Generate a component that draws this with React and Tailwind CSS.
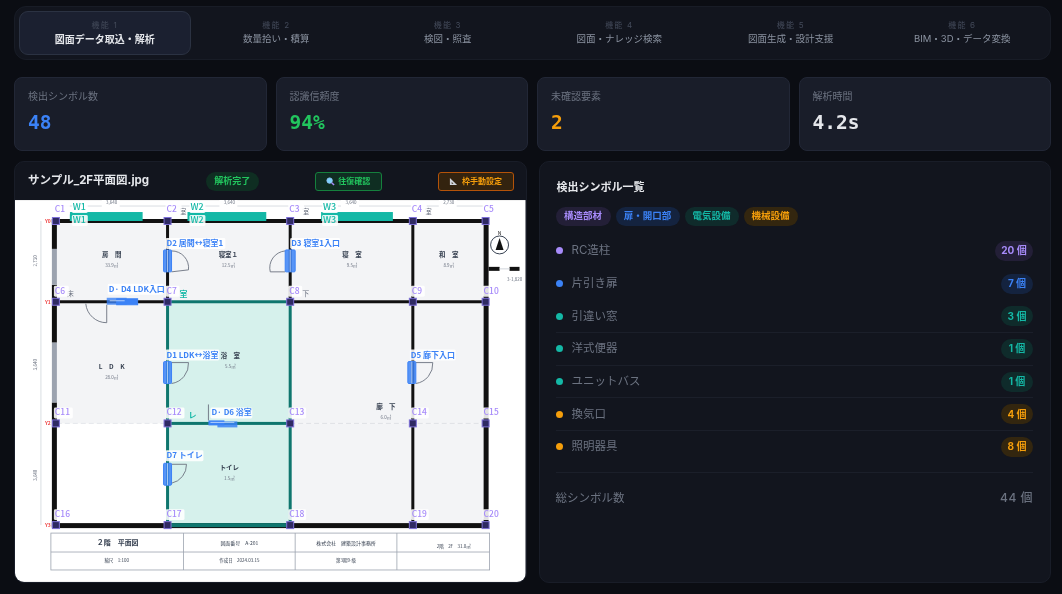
import React from "react";

const FONT = "font-['Inter','Noto_Sans_CJK_JP',sans-serif]";
const MONO = "font-['DejaVu_Sans_Mono','Noto_Sans_CJK_JP',monospace]";

const tabs = [
  ["機能 1", "図面データ取込・解析"],
  ["機能 2", "数量拾い・積算"],
  ["機能 3", "検図・照査"],
  ["機能 4", "図面・ナレッジ検索"],
  ["機能 5", "図面生成・設計支援"],
  ["機能 6", "BIM・3D・データ変換"],
];

const stats = [
  ["検出シンボル数", "48", "text-[#3b82f6]"],
  ["認識信頼度", "94%", "text-[#22c55e]"],
  ["未確認要素", "2", "text-[#f59e0b]"],
  ["解析時間", "4.2s", "text-[#e5e7eb]"],
];

const chips = [
  ["構造部材", "bg-[#231f37] text-[#a78bfa] w-[55px]"],
  ["扉・開口部", "bg-[#14233f] text-[#3b82f6] w-[64px]"],
  ["電気設備", "bg-[#0f2b2b] text-[#14b8a6] w-[54px]"],
  ["機械設備", "bg-[#33260f] text-[#f59e0b] w-[54px]"],
];

const rows = [
  ["RC造柱", "20 個", "bg-[#a78bfa]", "bg-[#231f37] text-[#a78bfa] w-[38px]", false],
  ["片引き扉", "7 個", "bg-[#3b82f6]", "bg-[#14233f] text-[#3b82f6] w-[32px]", false],
  ["引違い窓", "3 個", "bg-[#14b8a6]", "bg-[#0f2b2b] text-[#14b8a6] w-[32px]", true],
  ["洋式便器", "1 個", "bg-[#14b8a6]", "bg-[#0f2b2b] text-[#14b8a6] w-[32px]", true],
  ["ユニットバス", "1 個", "bg-[#14b8a6]", "bg-[#0f2b2b] text-[#14b8a6] w-[32px]", true],
  ["換気口", "4 個", "bg-[#f59e0b]", "bg-[#33260f] text-[#f59e0b] w-[32px]", true],
  ["照明器具", "8 個", "bg-[#f59e0b]", "bg-[#33260f] text-[#f59e0b] w-[32px]", false],
];

const JP = "'Noto Sans CJK JP', sans-serif";

function Label({ x, y, w, children, color = "#3b82f6", size = 8, weight = 700 }) {
  return (
    <g>
      <rect x={x - 1} y={y - 8} width={w} height={11} rx={1.5} fill="#ffffff" fillOpacity="0.88" />
      <text x={x} y={y} fontSize={size} fontWeight={weight} fill={color} fontFamily={JP}>{children}</text>
    </g>
  );
}

function Column({ x, y, name }) {
  return (
    <g>
      <rect x={x - 3.5} y={y - 3.5} width={7} height={7} fill="#2f2a63" stroke="#7c6fd6" strokeWidth="1" />
      <Label x={name.x} y={name.y} w={name.w} color="#a78bfa" size={8.5} weight={500}>{name.t}</Label>
    </g>
  );
}

function Room({ x, y, name, area }) {
  return (
    <g textAnchor="middle" fontFamily={JP}>
      <text x={x} y={y} fontSize="6.5" fontWeight="700" fill="#374151">{name}</text>
      <text x={x} y={y + 10} fontSize="4.5" fill="#6b7280">{area}</text>
    </g>
  );
}

function VDoor({ x, y, h = 22, w = 8 }) {
  return (
    <g>
      <rect x={x} y={y} width={w} height={h} rx="1" fill="#3b82f6" fillOpacity="0.85" stroke="#3b82f6" />
      <line x1={x + w / 2} y1={y} x2={x + w / 2} y2={y + h} stroke="#ffffff" strokeOpacity="0.6" />
    </g>
  );
}

function FloorPlan() {
  const columns = [
    [56, 221, { x: 55, y: 212, w: 16, t: "C1" }],
    [168, 221, { x: 167, y: 212, w: 16, t: "C2" }],
    [291, 221, { x: 290, y: 212, w: 16, t: "C3" }],
    [414, 221, { x: 413, y: 212, w: 16, t: "C4" }],
    [487, 221, { x: 485, y: 212, w: 14, t: "C5" }],
    [56, 302, { x: 55, y: 294, w: 15, t: "C6" }],
    [168, 302, { x: 167, y: 294, w: 14, t: "C7" }],
    [291, 302, { x: 290, y: 294, w: 14, t: "C8" }],
    [414, 302, { x: 413, y: 294, w: 14, t: "C9" }],
    [487, 302, { x: 485, y: 294, w: 18, t: "C10" }],
    [56, 424, { x: 55, y: 416, w: 19, t: "C11" }],
    [168, 424, { x: 167, y: 416, w: 19, t: "C12" }],
    [291, 424, { x: 290, y: 416, w: 18, t: "C13" }],
    [414, 424, { x: 413, y: 416, w: 18, t: "C14" }],
    [487, 424, { x: 485, y: 416, w: 18, t: "C15" }],
    [56, 526, { x: 55, y: 518, w: 19, t: "C16" }],
    [168, 526, { x: 167, y: 518, w: 19, t: "C17" }],
    [291, 526, { x: 290, y: 518, w: 18, t: "C18" }],
    [414, 526, { x: 413, y: 518, w: 18, t: "C19" }],
    [487, 526, { x: 485, y: 518, w: 18, t: "C20" }],
  ];
  return (
    <svg viewBox="15 200 512 383" className="block w-full h-full">
      <rect x="15" y="200" width="512" height="383" fill="#ffffff" />
      {/* room fills */}
      <rect x="56" y="221" width="431" height="203" fill="#f3f4f6" />
      <rect x="291" y="424" width="196" height="102" fill="#f3f4f6" />
      <rect x="168" y="302" width="123" height="224" fill="#d6f1ec" />

      {/* dimension lines */}
      <g stroke="#d1d5db" strokeWidth="0.8" fill="none">
        <line x1="56" y1="206" x2="487" y2="206" />
        <line x1="41" y1="221" x2="41" y2="526" />
      </g>
      <g fontSize="4.5" fill="#6b7280" textAnchor="middle" fontFamily={JP}>
        <rect x="102" y="199" width="18" height="8" fill="#fff" />
        <text x="112" y="204">3,640</text>
        <rect x="220" y="199" width="18" height="8" fill="#fff" />
        <text x="230" y="204">3,640</text>
        <rect x="342" y="199" width="18" height="8" fill="#fff" />
        <text x="352" y="204">3,640</text>
        <rect x="440" y="199" width="18" height="8" fill="#fff" />
        <text x="450" y="204">2,730</text>
        <text transform="translate(37 261) rotate(-90)">2,730</text>
        <text transform="translate(37 365) rotate(-90)">3,640</text>
        <text transform="translate(37 476) rotate(-90)">3,640</text>
        <text x="516" y="281">3-1,820</text>
      </g>
      <g fontSize="5" fontWeight="700" fill="#ef4444" fontFamily={JP}>
        <text x="45" y="223">Y0</text>
        <text x="45" y="304">Y1</text>
        <text x="45" y="426">Y2</text>
        <text x="45" y="528">Y3</text>
      </g>

      {/* exterior walls */}
      <g fill="#111111">
        <rect x="52" y="219" width="437" height="4" />
        <rect x="52" y="219" width="5" height="30" />
        <rect x="52" y="285" width="5" height="58" />
        <rect x="52" y="403" width="5" height="125" />
        <rect x="485" y="219" width="5" height="309" />
        <rect x="52" y="524" width="438" height="5" />
      </g>
      <g fill="#9ca3af">
        <rect x="52" y="249" width="5" height="36" />
        <rect x="52" y="343" width="5" height="60" />
      </g>
      {/* balcony stub */}
      <rect x="490" y="267" width="11" height="4" fill="#111" />
      <rect x="511" y="267" width="10" height="4" fill="#111" />
      <line x1="501" y1="269" x2="511" y2="269" stroke="#d1d5db" />

      {/* interior walls */}
      <g fill="#111111">
        <rect x="166.5" y="221" width="3" height="81" />
        <rect x="289.5" y="221" width="3" height="81" />
        <rect x="57" y="300.5" width="111" height="3" />
        <rect x="291" y="300.5" width="196" height="3" />
        <rect x="412.5" y="221" width="3" height="305" />
      </g>
      <line x1="57" y1="424" x2="168" y2="424" stroke="#e5e7eb" strokeDasharray="5 3" />
      <line x1="291" y1="424" x2="487" y2="424" stroke="#dfe1e5" strokeDasharray="5 3" />

      {/* green room walls */}
      <g fill="#0f766e">
        <rect x="166.5" y="302" width="3" height="224" />
        <rect x="289.5" y="302" width="3" height="224" />
        <rect x="168" y="300.5" width="123" height="3" />
        <rect x="168" y="422.5" width="123" height="3" />
        <rect x="168" y="524" width="123" height="4" />
      </g>

      {/* room names */}
      <Room x={112} y={257} name="房　間" area="33.9㎡" />
      <Room x={229} y={257} name="寝室１" area="12.5㎡" />
      <Room x={353} y={257} name="寝　室" area="9.5㎡" />
      <Room x={450} y={257} name="和　室" area="8.9㎡" />
      <Room x={112} y={369} name="L　D　K" area="28.0㎡" />
      <Room x={231} y={358} name="浴　室" area="5.5㎡" />
      <Room x={387} y={410} name="廊　下" area="6.0㎡" />
      <Room x={230} y={471} name="トイレ" area="1.5㎡" />

      {/* door swings */}
      <g stroke="#6b7280" strokeWidth="0.9" fill="none">
        <path d="M172 251 A 17 17 0 0 1 189 270 L 172 272" />
        <path d="M286 251 A 17 17 0 0 0 271 272 L 286 272" />
        <path d="M107 305 L 107 323 A 21 21 0 0 1 86 304" />
        <path d="M172 363 L 189 363 A 20 20 0 0 1 172 384" />
        <path d="M417 363 L 434 363 A 20 20 0 0 1 417 384" />
        <path d="M172 465 L 187 465 A 19 19 0 0 1 172 484" />
        <path d="M209 421 L 209 405" />
      </g>

      {/* doors */}
      <VDoor x={164} y={250} />
      <VDoor x={286} y={250} w={10} />
      <VDoor x={164} y={362} />
      <VDoor x={409} y={362} />
      <VDoor x={164} y={464} />
      <rect x="107" y="298" width="20" height="7" fill="#3b82f6" fillOpacity="0.8" />
      <rect x="117" y="299" width="21" height="6" fill="#3b82f6" stroke="#3b82f6" />
      <line x1="110" y1="301" x2="125" y2="301" stroke="#fff" strokeOpacity="0.6" />
      <rect x="209" y="421" width="16" height="5" fill="#3b82f6" />
      <rect x="218" y="422" width="20" height="6" fill="#3b82f6" fillOpacity="0.85" />
      <line x1="211" y1="423" x2="235" y2="423" stroke="#fff" strokeOpacity="0.6" />

      {/* windows */}
      <g fill="#14b8a6">
        <rect x="70" y="212" width="73" height="9" />
        <rect x="188" y="212" width="79" height="9" />
        <rect x="322" y="212" width="72" height="9" />
      </g>
      <Label x={73} y={210} w={16} color="#14b8a6" size={9} weight={500}>W1</Label>
      <Label x={73} y={223} w={16} color="#14b8a6" size={9} weight={500}>W1</Label>
      <Label x={191} y={210} w={16} color="#14b8a6" size={9} weight={500}>W2</Label>
      <Label x={191} y={223} w={16} color="#14b8a6" size={9} weight={500}>W2</Label>
      <Label x={324} y={210} w={16} color="#14b8a6" size={9} weight={500}>W3</Label>
      <Label x={324} y={223} w={16} color="#14b8a6" size={9} weight={500}>W3</Label>

      {/* small room symbols */}
      <g fontSize="7" fill="#6b7280" fontFamily={JP}>
        <text x="67" y="296">床</text>
        <text x="180" y="214">室</text>
        <text x="303" y="214">室</text>
        <text x="426" y="214">室</text>
        <text x="303" y="296">下</text>
      </g>
      <text x="180" y="297" fontSize="8" fontWeight="700" fill="#14b8a6" fontFamily={JP}>室</text>
      <text x="189" y="419" fontSize="8" fontWeight="700" fill="#14b8a6" fontFamily={JP}>レ</text>

      {/* columns */}
      {columns.map(([x, y, name]) => (
        <Column key={name.t} x={x} y={y} name={name} />
      ))}

      {/* door labels */}
      <Label x={167} y={246} w={60}>D2 居間↔寝室1</Label>
      <Label x={292} y={246} w={50}>D3 寝室1入口</Label>
      <Label x={109} y={292} w={56}>D· D4 LDK入口</Label>
      <Label x={167} y={358} w={54}>D1 LDK↔浴室</Label>
      <Label x={412} y={358} w={46}>D5 廊下入口</Label>
      <Label x={212} y={416} w={42}>D· D6 浴室</Label>
      <Label x={167} y={459} w={38}>D7 トイレ</Label>

      {/* compass */}
      <circle cx="501" cy="245" r="9" fill="#fff" stroke="#374151" strokeWidth="1" />
      <path d="M501 238 L505 250 L497 250 Z" fill="#111" />
      <text x="501" y="235" fontSize="5" textAnchor="middle" fill="#111" fontFamily={JP}>N</text>

      {/* title block */}
      <g stroke="#9ca3af" strokeWidth="0.8" fill="#fff">
        <rect x="51" y="534" width="440" height="37" />
        <line x1="51" y1="553" x2="491" y2="553" />
        <line x1="184" y1="534" x2="184" y2="571" />
        <line x1="296" y1="534" x2="296" y2="571" />
        <line x1="398" y1="534" x2="398" y2="571" />
      </g>
      <g textAnchor="middle" fontFamily={JP} fill="#374151">
        <text x="118" y="546" fontSize="7" fontWeight="700">２階　平面図</text>
        <text x="117" y="563" fontSize="4.5">縮尺　1:100</text>
        <text x="240" y="546" fontSize="5">図面番号　A-201</text>
        <text x="240" y="563" fontSize="4.5">作成日　2024.03.15</text>
        <text x="347" y="546" fontSize="5">株式会社　建築設計事務所</text>
        <text x="347" y="563" fontSize="4.5">第3期9-级</text>
        <text x="455" y="549" fontSize="4.5">2階　2F　31.0㎡</text>
      </g>
    </svg>
  );
}

export default function App() {
  return (
    <div className={`${FONT} w-[1062px] h-[594px] overflow-hidden bg-[#0b0d13] pl-[14px] pr-[11px] pt-[6px] flex flex-col blur-[0.7px]`}>
      <nav className="h-[54px] shrink-0 rounded-xl border border-[#181c26] bg-[#12151e] pl-1 pr-[2px] py-1 grid grid-cols-6">
        {tabs.map(([n, label], i) => (
          <div
            key={n}
            className={`flex flex-col items-center justify-center rounded-[9px] border ${
              i === 0 ? "border-[#2b3242] bg-[#1b2030]" : "border-transparent"
            }`}
          >
            <span className="text-[8px] leading-[12px] tracking-[1.2px] text-[#434a5a]">{n}</span>
            <span className={`leading-[16px] ${i === 0 ? "text-[10px] font-bold text-[#e5e7eb]" : "text-[9.5px] text-[#8b93a1]"}`}>{label}</span>
          </div>
        ))}
      </nav>

      <section className="mt-[17px] h-[74px] shrink-0 grid grid-cols-4 gap-[9px]">
        {stats.map(([label, value, color]) => (
          <div key={label} className="rounded-lg border border-[#222736] bg-[#191d29] px-[13px] pt-[11px]">
            <div className="text-[10px] leading-[15px] text-[#6b7280]">{label}</div>
            <div className={`${MONO} ${color} mt-[5px] text-[19.5px] leading-[28px] font-bold`}>{value}</div>
          </div>
        ))}
      </section>

      <main className="mt-[10px] h-[422px] shrink-0 grid grid-cols-2 gap-[12px]">
        <div className="rounded-[10px] border border-[#191d28] bg-[#12151e] overflow-hidden flex flex-col">
          <header className="h-[38px] shrink-0 flex items-center pl-[13px] pr-[12px]">
            <span className="w-[178px] text-[11.5px] font-bold text-[#e5e7eb]">サンプル_2F平面図.jpg</span>
            <span className="w-[53px] h-[19px] rounded-full bg-[#0f2e22] text-[#22c55e] text-[9px] font-bold flex items-center justify-center">解析完了</span>
            <span className="ml-[56px] w-[67px] h-[19px] rounded-[3px] border border-[#15803d] bg-[#0f2e22] text-[#22c55e] text-[8px] font-bold flex items-center justify-center gap-[3px]">
              <svg width="9" height="9" viewBox="0 0 10 10" fill="none">
                <circle cx="4" cy="4" r="3" fill="#7dd3fc" stroke="#93c5fd" />
                <path d="M6.3 6.3 L9 9" stroke="#a78bfa" strokeWidth="1.6" />
              </svg>
              往復確認
            </span>
            <span className="ml-[56px] w-[76px] h-[19px] rounded-[3px] border border-[#b45309] bg-[#33230f] text-[#f59e0b] text-[8px] font-bold flex items-center justify-center gap-[4px]">
              <svg width="9" height="9" viewBox="0 0 10 10">
                <path d="M1 1 L9 9 L1 9 Z M3 5.5 L3 7.5 L5 7.5 Z" fill="#d1d5db" fillRule="evenodd" />
              </svg>
              枠手動設定
            </span>
          </header>
          <div className="flex-1 min-h-0">
            <FloorPlan />
          </div>
        </div>

        <div className="rounded-[10px] border border-[#191d28] bg-[#12151e] pl-[16px] pr-[17px] pt-[17px] flex flex-col">
          <h2 className="ml-px text-[11px] leading-[16px] font-bold text-[#e5e7eb]">検出シンボル一覧</h2>
          <div className="mt-[12px] flex gap-[5px]">
            {chips.map(([t, c]) => (
              <span key={t} className={`${c} h-[19px] rounded-full text-[9.5px] font-bold flex items-center justify-center`}>{t}</span>
            ))}
          </div>
          <ul className="mt-[9px] flex flex-col">
            {rows.map(([name, count, dot, badge, line]) => (
              <li
                key={name}
                className={`h-[32.7px] flex items-center gap-[9px] border-b ${line ? "border-[#1b1f2a]" : "border-transparent"}`}
              >
                <span className={`${dot} w-[7px] h-[7px] rounded-full`} />
                <span className="flex-1 text-[11.5px] text-[#6b7280]">{name}</span>
                <span className={`${badge} h-[20px] rounded-full text-[10px] font-bold flex items-center justify-center`}>{count}</span>
              </li>
            ))}
          </ul>
          <div className="mt-[8px] border-t border-[#1b1f2a] pt-[17px] flex items-center justify-between text-[#6b7280]">
            <span className="text-[11.5px] leading-[16px]">総シンボル数</span>
            <span className="text-[12px] leading-[16px] font-medium tracking-[0.5px]">44 個</span>
          </div>
        </div>
      </main>
    </div>
  );
}
